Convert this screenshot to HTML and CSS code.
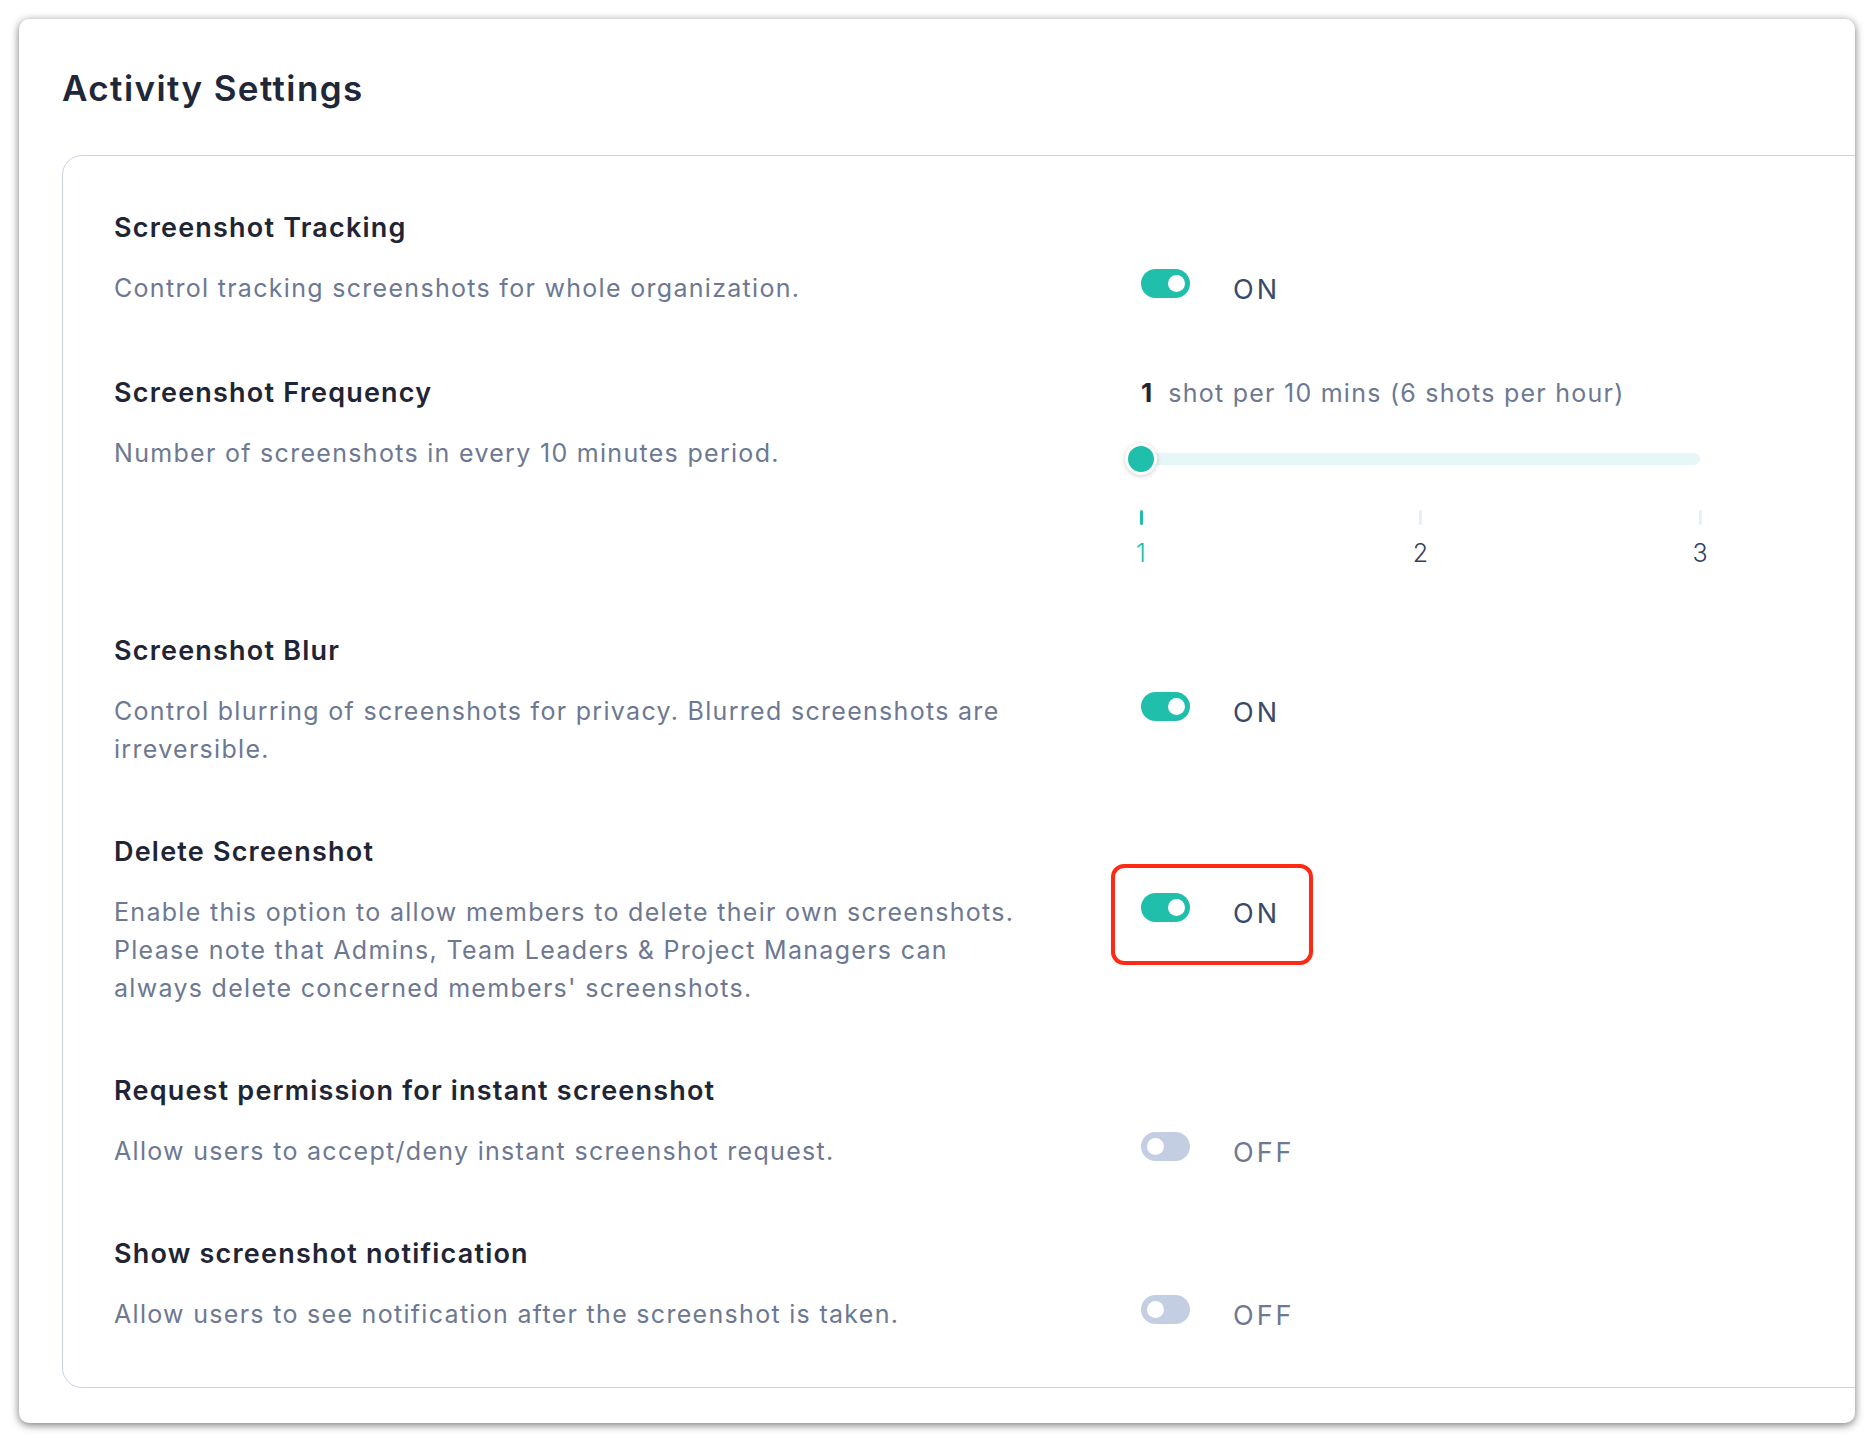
FILE: index.html
```html
<!DOCTYPE html>
<html lang="en">
<head>
<meta charset="utf-8">
<title>Activity Settings</title>
<link rel="stylesheet" href="styles.css">
</head>
<body>
<div class="page">
  <section class="card">
    <h1 class="card-title">Activity Settings</h1>
    <div class="panel">
      <div class="rows">
        <div class="row">
          <div class="info">
            <h3 class="row-title">Screenshot Tracking</h3>
            <p class="row-desc">Control tracking screenshots for whole organization.</p>
          </div>
          <div class="control">
            <div class="switch-wrap">
              <span class="switch on"><span class="knob"></span></span>
              <span class="state on">ON</span>
            </div>
          </div>
        </div>

        <div class="row row-slider">
          <div class="info">
            <h3 class="row-title">Screenshot Frequency</h3>
            <p class="row-desc">Number of screenshots in every 10 minutes period.</p>
          </div>
          <div class="control control-slider">
            <div class="freq"><span class="freq-num">1</span><span class="freq-text">shot per 10 mins (6 shots per hour)</span></div>
            <div class="slider">
              <div class="track"></div>
              <span class="thumb"></span>
            </div>
            <div class="ticks">
              <span class="tick active"></span>
              <span class="tick"></span>
              <span class="tick"></span>
            </div>
            <div class="marks">
              <span class="mark active">1</span>
              <span class="mark">2</span>
              <span class="mark">3</span>
            </div>
          </div>
        </div>

        <div class="row">
          <div class="info">
            <h3 class="row-title">Screenshot Blur</h3>
            <p class="row-desc">Control blurring of screenshots for privacy. Blurred screenshots are<br>irreversible.</p>
          </div>
          <div class="control">
            <div class="switch-wrap">
              <span class="switch on"><span class="knob"></span></span>
              <span class="state on">ON</span>
            </div>
          </div>
        </div>

        <div class="row">
          <div class="info">
            <h3 class="row-title">Delete Screenshot</h3>
            <p class="row-desc">Enable this option to allow members to delete their own screenshots.<br>Please note that Admins, Team Leaders &amp; Project Managers can<br>always delete concerned members' screenshots.</p>
          </div>
          <div class="control">
            <div class="switch-wrap">
              <span class="switch on"><span class="knob"></span></span>
              <span class="state on">ON</span>
              <span class="highlight"></span>
            </div>
          </div>
        </div>

        <div class="row">
          <div class="info">
            <h3 class="row-title">Request permission for instant screenshot</h3>
            <p class="row-desc">Allow users to accept/deny instant screenshot request.</p>
          </div>
          <div class="control">
            <div class="switch-wrap">
              <span class="switch"><span class="knob"></span></span>
              <span class="state">OFF</span>
            </div>
          </div>
        </div>

        <div class="row">
          <div class="info">
            <h3 class="row-title">Show screenshot notification</h3>
            <p class="row-desc">Allow users to see notification after the screenshot is taken.</p>
          </div>
          <div class="control">
            <div class="switch-wrap">
              <span class="switch"><span class="knob"></span></span>
              <span class="state">OFF</span>
            </div>
          </div>
        </div>
      </div>
    </div>
  </section>
</div>
</body>
</html>
```

FILE: styles.css
```css
* { box-sizing: border-box; }

html, body {
  margin: 0;
  padding: 0;
  background: #ffffff;
}

body {
  font-family: Inter, "Open Sans", "Liberation Sans", sans-serif;
  color: #1f2535;
}

.page {
  padding: 19px;
}

.card {
  background: #ffffff;
  border-radius: 10px;
  box-shadow: 0 2px 9px rgba(0, 0, 0, 0.55);
  padding: 49px 0 35px 43px;
  overflow: hidden;
}

.card-title {
  margin: 0 0 46px;
  font-size: 35px;
  line-height: 41px;
  font-weight: 600;
  color: #1f2738;
  letter-spacing: 1.4px;
}

.panel {
  border: 1px solid #c8d1e2;
  border-radius: 20px;
  margin-right: -40px;
  padding: 54px 0 54.5px 51px;
}

.rows {
  display: flex;
  flex-direction: column;
  gap: 66px;
}

.row {
  display: grid;
  grid-template-columns: 1027px 1fr;
}

.row-slider {
  margin-top: 2px;
  margin-bottom: -1.5px;
}

.info {
  min-width: 0;
}

.row-title {
  margin: 0 0 23px;
  font-size: 27px;
  line-height: 36px;
  font-weight: 600;
  color: #1f2535;
  letter-spacing: 1.2px;
}

.row-desc {
  margin: 0;
  font-size: 25px;
  line-height: 38px;
  font-weight: 400;
  color: #6d7892;
  letter-spacing: 1.3px;
}

.control {
  padding-top: 59px;
}

.switch-wrap {
  position: relative;
  display: flex;
  align-items: flex-start;
  gap: 43px;
}

.switch {
  position: relative;
  display: block;
  width: 49px;
  height: 29px;
  border-radius: 15px;
  background: #c4cee2;
  flex: none;
}

.switch.on {
  background: #20bfab;
}

.knob {
  position: absolute;
  top: 6px;
  left: 6px;
  width: 17px;
  height: 17px;
  border-radius: 50%;
  background: #ffffff;
}

.switch.on .knob {
  left: 27px;
}

.state {
  margin-top: 6px;
  font-size: 27px;
  line-height: 30px;
  font-weight: 400;
  color: #6d7892;
  letter-spacing: 3px;
}

.state.on {
  color: #3a4a6a;
}

.highlight {
  position: absolute;
  left: -30px;
  top: -29px;
  width: 202px;
  height: 101px;
  border: 4px solid #ff2a14;
  border-radius: 13px;
  pointer-events: none;
}

.control-slider {
  padding-top: 0;
  width: 559px;
}

.freq {
  display: flex;
  align-items: baseline;
  gap: 16px;
  height: 36px;
  line-height: 36px;
}

.freq-num {
  font-size: 26px;
  font-weight: 700;
  color: #1f2535;
}

.freq-text {
  font-size: 25px;
  color: #6d7892;
  letter-spacing: 1.25px;
  white-space: nowrap;
}

.slider {
  position: relative;
  margin-top: 35px;
  height: 26px;
}

.track {
  position: absolute;
  left: 0;
  right: 0;
  top: 7px;
  height: 12px;
  border-radius: 6px;
  background: #e7f6f6;
}

.thumb {
  position: absolute;
  left: -16px;
  top: -3px;
  width: 32px;
  height: 32px;
  border-radius: 50%;
  background: #20bfab;
  border: 3px solid #ffffff;
  box-shadow: 0 1px 5px rgba(0, 0, 0, 0.2);
}

.ticks,
.marks {
  display: flex;
  justify-content: space-between;
  margin: 0 -10px;
}

.ticks {
  margin-top: 38px;
  height: 15px;
}

.tick {
  width: 20px;
  height: 15px;
  position: relative;
}

.tick::after {
  content: "";
  position: absolute;
  left: 8.5px;
  top: 0;
  width: 3px;
  height: 15px;
  border-radius: 2px;
  background: #e3f3f5;
}

.tick.active::after {
  background: #20bfab;
}

.marks {
  margin-top: 13px;
}

.mark {
  width: 20px;
  text-align: center;
  font-size: 25px;
  line-height: 30px;
  font-weight: 300;
  color: #34405c;
}

.mark.active {
  color: #20bfab;
}
```
